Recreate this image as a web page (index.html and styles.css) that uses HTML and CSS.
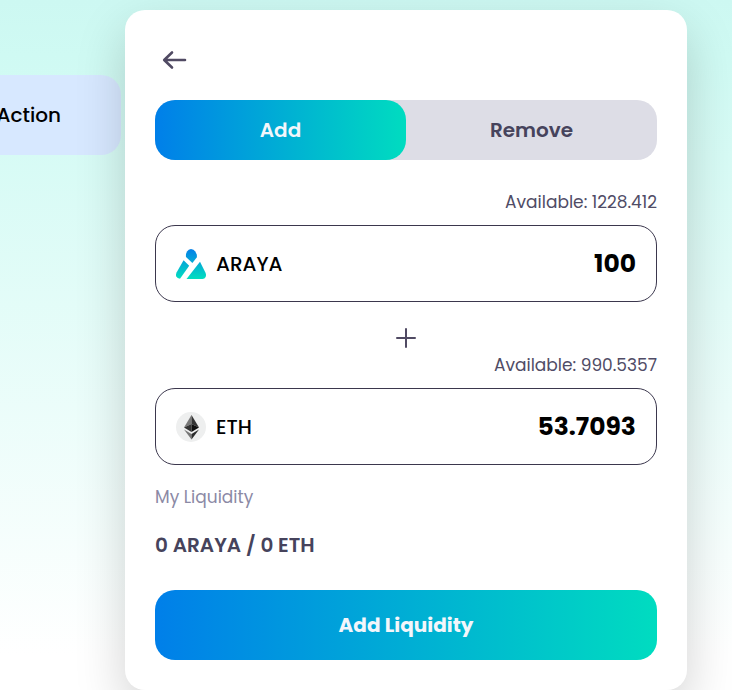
FILE: index.html
```html
<!DOCTYPE html>
<html lang="en">
<head>
<meta charset="utf-8">
<meta name="viewport" content="width=device-width, initial-scale=1">
<title>Liquidity</title>
<link rel="stylesheet" href="styles.css">
</head>
<body>
<div class="page">
  <nav class="side"><a class="side-link" href="#">Action</a></nav>
  <main class="card">
    <button class="back" type="button" aria-label="Back">
      <svg width="40" height="40" viewBox="0 0 40 40" fill="none" stroke="#504a63" stroke-width="2.6" stroke-linecap="round" stroke-linejoin="round"><path d="M30 20H9.500M17 12.500L9.200 20L17 27.500"/></svg>
    </button>
    <div class="tabs">
      <button class="tab tab-active" type="button">Add</button>
      <button class="tab" type="button">Remove</button>
    </div>
    <p class="available">Available: 1228.412</p>
    <div class="field">
      <svg class="token" viewBox="0 0 30 30">
        <defs><linearGradient id="araya" gradientUnits="userSpaceOnUse" x1="0" y1="0" x2="0" y2="30"><stop offset="0" stop-color="#0580e8"/><stop offset="1" stop-color="#02dfbf"/></linearGradient></defs>
        <g fill="url(#araya)">
          <path d="M10 8Q9.600 5 11 2.500Q12.500 0 15 0Q17.800 0 19.300 2.500L20.600 5.200Q21.200 6.800 20.700 8.500L16.400 14Z"/>
          <path d="M7.600 11.200L13.200 16.700L4 29.700Q1.200 29.700.3 27.600Q-.5 25.700.7 23.200Z"/>
          <path d="M24 12.800L29.400 23.500Q30.500 26 29.600 28Q28.700 30 26.500 30H10.500Z"/>
        </g>
      </svg>
      <label class="symbol" for="araya-amount">ARAYA</label>
      <input class="amount" id="araya-amount" type="text" inputmode="decimal" value="100">
    </div>
    <svg class="plus" viewBox="0 0 20 20" fill="none" stroke="#504a63" stroke-width="2" stroke-linecap="round"><path d="M10 1V19M1 10H19"/></svg>
    <p class="available">Available: 990.5357</p>
    <div class="field">
      <svg class="token" viewBox="0 0 30 30">
        <circle cx="15" cy="15" r="15" fill="#eeefef"/>
        <path d="M15.500 3V12L8 15.500Z" fill="#777"/>
        <path d="M15.500 3V12L23 15.500Z" fill="#343434"/>
        <path d="M15.500 12V20L8 15.500Z" fill="#343434"/>
        <path d="M15.500 12V20L23 15.500Z" fill="#101010"/>
        <path d="M8 17.500L15.500 22V27.500Z" fill="#777"/>
        <path d="M23 17.500L15.500 22V27.500Z" fill="#2b2b2b"/>
      </svg>
      <label class="symbol" for="eth-amount">ETH</label>
      <input class="amount" id="eth-amount" type="text" inputmode="decimal" value="53.7093">
    </div>
    <p class="caption">My Liquidity</p>
    <p class="position">0 ARAYA / 0 ETH</p>
    <button class="submit" type="button">Add Liquidity</button>
  </main>
</div>
</body>
</html>
```
FILE: styles.css
```css
* { box-sizing: border-box; }
body {
  margin: 0;
  background: #fff;
  color: #000;
  font-family: Poppins, Inter, "Open Sans", sans-serif;
}
button, input { font: inherit; border: 0; }
p { margin: 0; }
.page {
  display: flex;
  align-items: flex-start;
  gap: 4px;
  padding: 10px 45px 0 0;
  margin-bottom: 3px;
  overflow: hidden;
  background: linear-gradient(#cdf8f2, #cffaf3 8%, #fff 95%);
}
.side {
  flex: 0 0 121px;
  min-width: 0;
  padding-top: 65px;
}
.side-link {
  display: flex;
  align-items: center;
  justify-content: flex-end;
  height: 80px;
  padding-right: 60px;
  border-radius: 0 20px 20px 0;
  background: #d7e8ff;
  color: #000;
  font-size: 20px;
  font-weight: 500;
  text-decoration: none;
}
.card {
  flex: 1;
  min-width: 0;
  display: flex;
  flex-direction: column;
  padding: 30px;
  border-radius: 20px;
  background: #fff;
  box-shadow: 0 20px 50px rgba(0, 0, 0, .18);
  z-index: 1;
}
.back {
  width: 40px;
  height: 40px;
  padding: 0;
  background: none;
}
.back svg { display: block; }
.tabs {
  display: flex;
  height: 60px;
  margin: 20px 0 30px;
  border-radius: 20px;
  background: #dddde6;
}
.tab {
  flex: 1;
  border-radius: 20px;
  background: none;
  color: #46435c;
  font-size: 20px;
  font-weight: 600;
}
.tab-active, .submit {
  background: linear-gradient(90deg, #007fe9, #00dcc0);
  color: #f3f6fb;
}
.available, .caption {
  color: #504c66;
  font-size: 17px;
  font-weight: 400;
  line-height: 24px;
}
.available { text-align: right; }
.field {
  display: flex;
  align-items: center;
  gap: 10px;
  height: 77px;
  margin-top: 11px;
  padding: 0 20px;
  border: 1px solid #3b374d;
  border-radius: 20px;
}
.token {
  flex: none;
  width: 30px;
  height: 30px;
}
.symbol {
  font-size: 20px;
  font-weight: 500;
}
.amount {
  flex: 1;
  min-width: 0;
  padding: 0;
  background: none;
  color: #000;
  font-size: 25px;
  font-weight: 700;
  text-align: right;
}
.plus {
  width: 20px;
  height: 20px;
  margin: 26px auto 5px;
}
.caption {
  margin-top: 20px;
  color: #8b89a5;
}
.position {
  margin: 21px 0 30px;
  color: #46435c;
  font-size: 20px;
  font-weight: 600;
  line-height: 30px;
}
.submit {
  height: 70px;
  border-radius: 20px;
  font-size: 20px;
  font-weight: 700;
}
```
